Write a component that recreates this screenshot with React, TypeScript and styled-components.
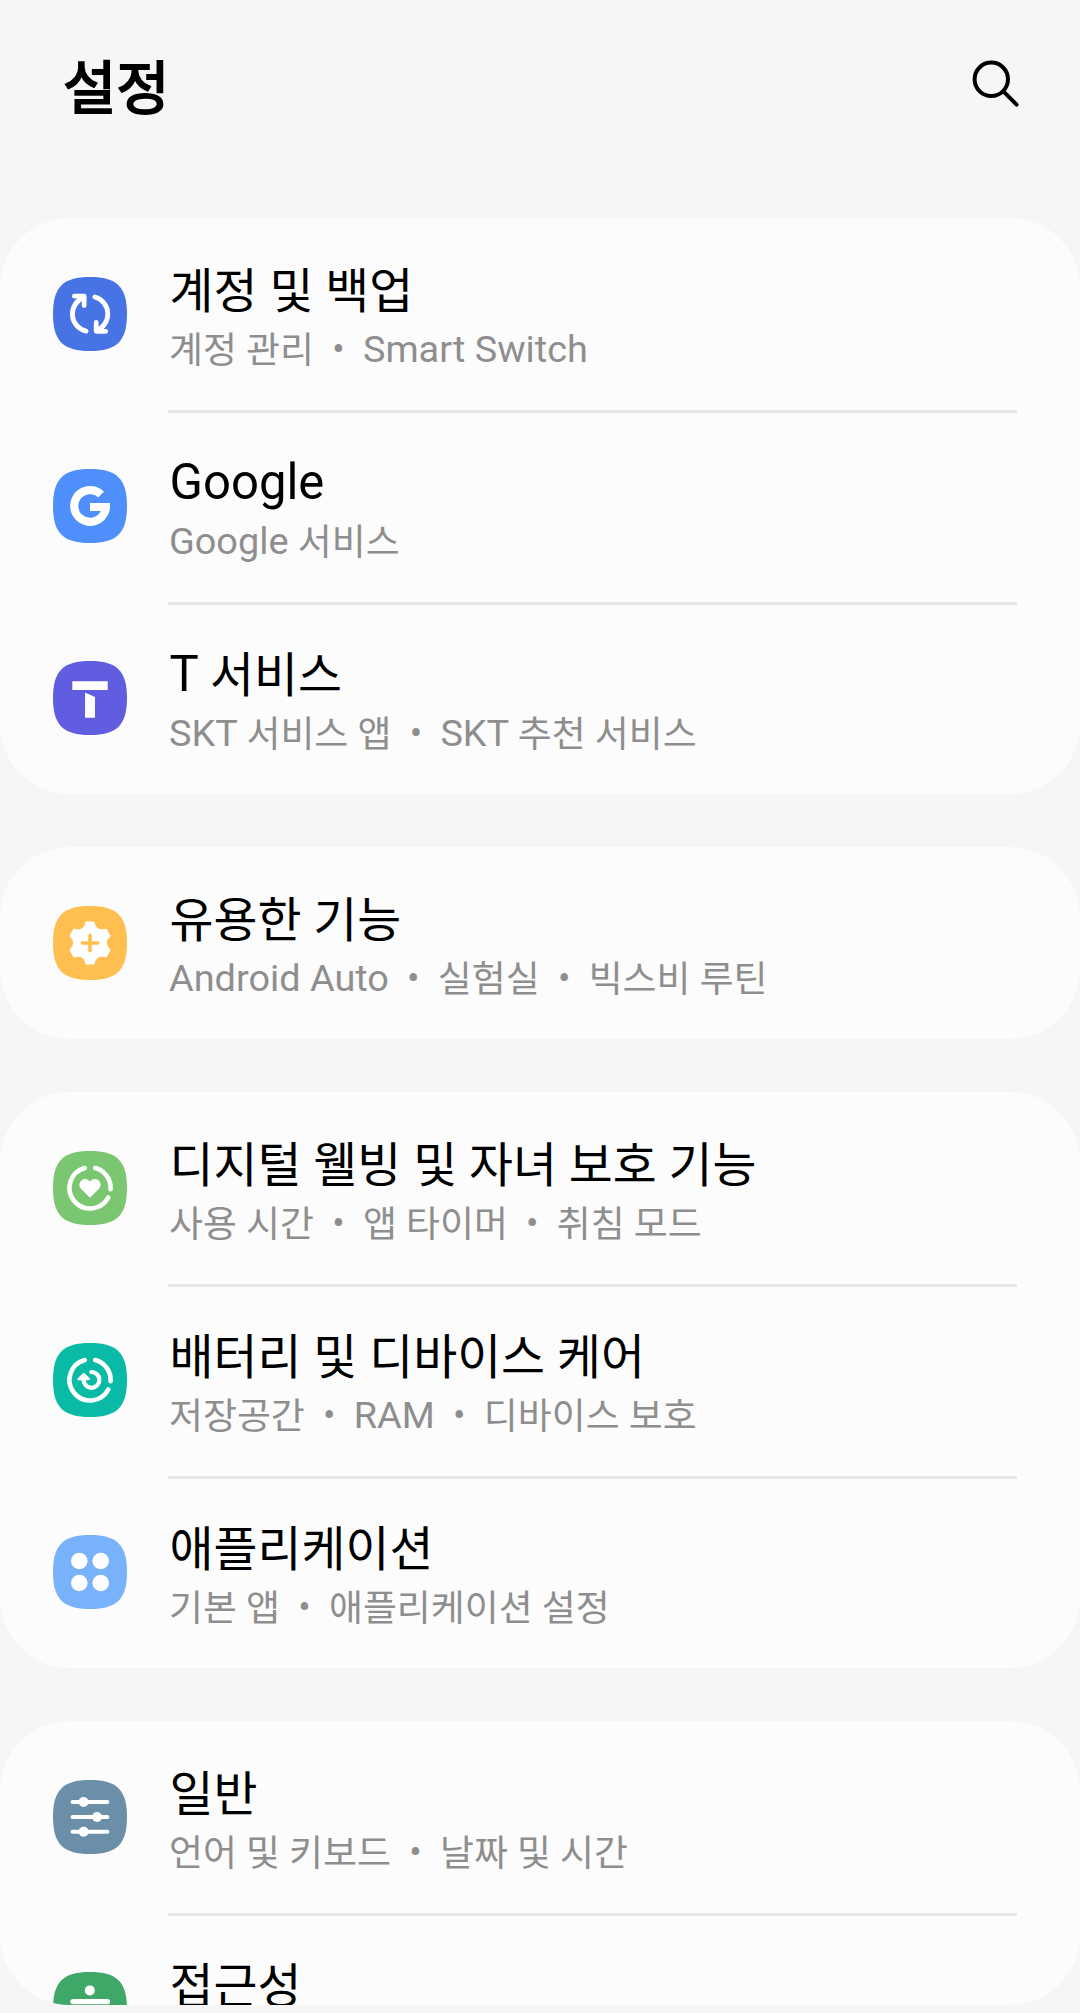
import React from 'react';
import styled, { createGlobalStyle } from 'styled-components';

const GlobalStyle = createGlobalStyle`
  * { box-sizing: border-box; }
  body {
    margin: 0;
    background: #f6f6f6;
    font-family: Roboto, "Noto Sans CJK KR", sans-serif;
  }
`;

const Screen = styled.main`
  width: 1080px;
  height: 2013px;
  overflow: hidden;
  background: #f6f6f6;
`;

const Header = styled.header`
  display: flex;
  justify-content: space-between;
  align-items: flex-start;
  height: 218px;
  padding: 48px 54px 0 63px;
`;

const Heading = styled.h1`
  margin: 1px 0 0;
  font-size: 58px;
  line-height: 80px;
  font-weight: 400;
  -webkit-text-stroke: 1.9px #000;
  color: #000;
`;

const SearchButton = styled.button`
  display: flex;
  width: 60px;
  height: 60px;
  margin-top: 6px;
  padding: 0;
  border: 0;
  background: none;
`;

const Sections = styled.div`
  display: flex;
  flex-direction: column;
  gap: 53px;
`;

const Card = styled.section<{ $height?: number }>`
  flex: none;
  height: ${(p) => (p.$height ? `${p.$height}px` : 'auto')};
  overflow: hidden;
  border-radius: 70px;
  background: #fcfcfc;
`;

const Row = styled.div`
  display: flex;
  align-items: center;
  height: 192px;
  padding: 0 63px 0 53px;
`;

const RowIcon = styled.svg`
  flex: none;
  width: 74px;
  height: 74px;
  margin-right: 41px;
`;

const RowBody = styled.div<{ $divided: boolean }>`
  flex: 1;
  height: 100%;
  padding-top: ${(p) => (p.$divided ? 43 : 46)}px;
  padding-left: 1px;
  border-top: ${(p) => (p.$divided ? '3px solid #e8e8e8' : '0')};
  white-space: nowrap;
`;

const Title = styled.div`
  padding-left: 0.6px;
  font-size: 47.8px;
  line-height: 56px;
  color: #000;
`;

const Summary = styled.div`
  margin-top: 6px;
  font-size: 36.9px;
  line-height: 50px;
  color: #8e8e8e;
`;

const Latin = styled.span`
  font-size: 1.026em;
  line-height: 0;
  vertical-align: 1px;
`;

const Dot = styled.span`
  display: inline-block;
  width: 49px;
  text-align: center;
  line-height: 0;
  vertical-align: 1px;
`;

const ring = (
  <g fill="none" stroke="#fff" strokeWidth="4.6" strokeLinecap="round">
    <path d="M42.2 17A20.6 20.6 0 0 1 57.6 38.3" />
    <path d="M55.3 46.5A20.6 20.6 0 1 1 31.8 17" />
  </g>
);

const tooth = [0, 60, 120, 180, 240, 300]
  .map((deg, i) => {
    const at = (x: number, y: number) => {
      const a = (deg * Math.PI) / 180;
      return `${(37 + x * Math.cos(a) - y * Math.sin(a)).toFixed(2)} ${(37 + x * Math.sin(a) + y * Math.cos(a)).toFixed(2)}`;
    };
    const next = (60 * Math.PI) / 180;
    const nx = -3.8 * Math.cos(next) + 20.6 * Math.sin(next);
    const ny = -3.8 * Math.sin(next) - 20.6 * Math.cos(next);
    return `${i === 0 ? 'M' : 'L'}${at(-3.8, -20.6)}L${at(3.8, -20.6)}Q${at(6.1, -10.6)} ${at(nx, ny)}`;
  })
  .join('');

const glyphs: Record<string, React.ReactNode> = {
  sync: (
    <g fill="none" stroke="#fff" strokeWidth="4.8" strokeLinecap="round" strokeLinejoin="round">
      <path d="M33 54.1A17.6 17.6 0 0 1 30.5 20.6" />
      <path d="M21.4 19.2H31.2V28.5" />
      <path d="M41.9 20A17.6 17.6 0 0 1 43.5 53.4" />
      <path d="M43.2 45.5V54.3H52.7" />
    </g>
  ),
  google: (
    <path
      fill="#fff"
      d="M51 22.5A20 20 0 1 0 56.9 34H37V42H47.8A11.8 11.8 0 1 1 45.2 28.4Z"
    />
  ),
  tservice: (
    <g fill="#fff">
      <path d="M19.3 20.3H54.7V29H19.3Z" />
      <path d="M32 31.5L42 36V56.7H32Z" />
    </g>
  ),
  gear: (
    <>
      <path d={tooth + 'Z'} fill="#fff" stroke="#fff" strokeWidth="1.6" strokeLinejoin="round" />
      <path d="M29.3 37H44.8M37 29.3V44.8" stroke="#ffbf50" strokeWidth="3.6" strokeLinecap="round" />
    </>
  ),
  heart: (
    <>
      {ring}
      <path
        fill="#fff"
        d="M37 30.6C34.5 27.2 30.6 27.3 28.4 29.4C25.7 31.9 25.8 35.4 28.2 37.9L35.7 45.6Q37 46.8 38.3 45.6L45.8 37.9C48.2 35.4 48.3 31.9 45.6 29.4C43.4 27.3 39.5 27.2 37 30.6Z"
      />
    </>
  ),
  care: (
    <>
      {ring}
      <path d="M38.3 29A7.9 7.9 0 1 1 30.6 37.5" fill="none" stroke="#fff" strokeWidth="4.2" strokeLinecap="round" />
      <path d="M25.6 36L30.8 31L36 36Z" fill="#fff" stroke="#fff" strokeWidth="2.4" strokeLinejoin="round" />
    </>
  ),
  apps: (
    <g fill="#fff">
      <circle cx="26.3" cy="26" r="8.3" />
      <circle cx="47.7" cy="26" r="8.3" />
      <circle cx="26.3" cy="48" r="8.3" />
      <circle cx="47.7" cy="48" r="8.3" />
    </g>
  ),
  sliders: (
    <>
      <path d="M19.6 22H54.4M19.6 37H54.4M19.6 51.8H54.4" stroke="#fff" strokeWidth="4" strokeLinecap="round" />
      <g fill="#fff">
        <circle cx="30.6" cy="22" r="5" />
        <circle cx="44" cy="37" r="5" />
        <circle cx="30.6" cy="51.8" r="5" />
      </g>
    </>
  ),
  access: (
    <>
      <circle cx="36.8" cy="18.4" r="5" fill="#fff" />
      <path d="M20 29.6H54.4" stroke="#fff" strokeWidth="5.4" strokeLinecap="round" />
      <path d="M37 36V42L29 56M37 42L45 56" stroke="#fff" strokeWidth="5" fill="none" strokeLinecap="round" />
    </>
  ),
};

type Item = { icon: string; color: string; title: string; summary: string[] };

const cards: { height?: number; items: Item[] }[] = [
  {
    items: [
      { icon: 'sync', color: '#4873e4', title: '계정 및 백업', summary: ['계정 관리', 'Smart Switch'] },
      { icon: 'google', color: '#4f8ffb', title: 'Google', summary: ['Google 서비스'] },
      { icon: 'tservice', color: '#615de1', title: 'T 서비스', summary: ['SKT 서비스 앱', 'SKT 추천 서비스'] },
    ],
  },
  {
    items: [
      { icon: 'gear', color: '#ffbf50', title: '유용한 기능', summary: ['Android Auto', '실험실', '빅스비 루틴'] },
    ],
  },
  {
    items: [
      { icon: 'heart', color: '#7ac671', title: '디지털 웰빙 및 자녀 보호 기능', summary: ['사용 시간', '앱 타이머', '취침 모드'] },
      { icon: 'care', color: '#09bba6', title: '배터리 및 디바이스 케어', summary: ['저장공간', 'RAM', '디바이스 보호'] },
      { icon: 'apps', color: '#77b2fb', title: '애플리케이션', summary: ['기본 앱', '애플리케이션 설정'] },
    ],
  },
  {
    height: 284,
    items: [
      { icon: 'sliders', color: '#6c8fa9', title: '일반', summary: ['언어 및 키보드', '날짜 및 시간'] },
      { icon: 'access', color: '#3fa768', title: '접근성', summary: [] },
    ],
  },
];

/** Sets Latin runs slightly larger than the Hangul around them. */
function Mixed({ text }: { text: string }) {
  return (
    <>
      {text
        .split(/([A-Za-z][A-Za-z ]*)/)
        .filter(Boolean)
        .map((run, i) => (/^[A-Za-z]/.test(run) ? <Latin key={i}>{run}</Latin> : run))}
    </>
  );
}

function SettingRow({ item, divided }: { item: Item; divided: boolean }) {
  return (
    <Row>
      <RowIcon viewBox="0 0 74 74">
        <path
          fill={item.color}
          d="M37 0C64 0 74 10 74 37S64 74 37 74S0 64 0 37S10 0 37 0Z"
        />
        {glyphs[item.icon]}
      </RowIcon>
      <RowBody $divided={divided}>
        <Title>
          <Mixed text={item.title} />
        </Title>
        <Summary>
          {item.summary.map((part, i) => (
            <React.Fragment key={part}>
              {i > 0 && <Dot>•</Dot>}
              <Mixed text={part} />
            </React.Fragment>
          ))}
        </Summary>
      </RowBody>
    </Row>
  );
}

export default function App() {
  return (
    <>
      <GlobalStyle />
      <Screen>
        <Header>
          <Heading>설정</Heading>
          <SearchButton aria-label="검색">
            <svg width="60" height="60" viewBox="0 0 60 60" fill="none" stroke="#000" strokeWidth="4" strokeLinecap="round">
              <circle cx="25.3" cy="25.3" r="16.7" />
              <path d="M37.4 37.4L50.6 50.6" />
            </svg>
          </SearchButton>
        </Header>
        <Sections>
          {cards.map((card) => (
            <Card key={card.items[0].title} $height={card.height}>
              {card.items.map((item, i) => (
                <SettingRow key={item.title} item={item} divided={i > 0} />
              ))}
            </Card>
          ))}
        </Sections>
      </Screen>
    </>
  );
}
